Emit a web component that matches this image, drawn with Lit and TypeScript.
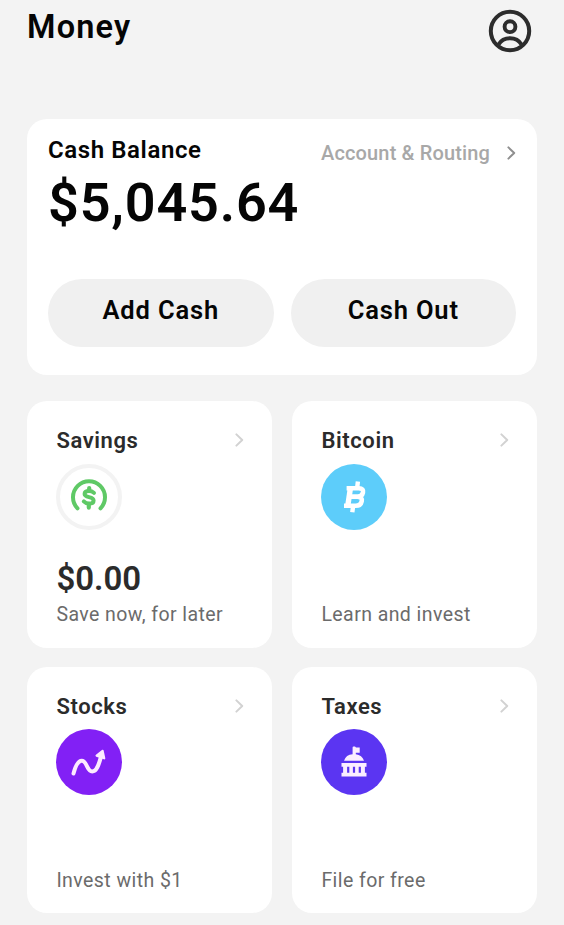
import { LitElement, html, css, svg, TemplateResult } from "lit";
import { customElement, property } from "lit/decorators.js";

const chevron = html`<svg class="chevron" width="9" height="14" viewBox="0 0 9 14">
  <path d="M1.400 1.400 7.200 7 1.400 12.600" fill="none" stroke="currentColor" stroke-width="2" stroke-linecap="round" stroke-linejoin="round" />
</svg>`;

const savingsIcon = svg`
  <circle cx="33" cy="33" r="31" fill="#fff" stroke="#f3f3f3" stroke-width="4" />
  <g fill="none" stroke="#5fc966" stroke-linecap="round" stroke-linejoin="round">
    <path d="M21.500 44.300A16 16 0 1 1 44.500 44.300" stroke-width="4" />
    <path d="M38 28.900C36.600 27.600 35 27 33 27c-2.700 0-4.400 1.200-4.400 3.100 0 4.200 9 1.800 9 6.300 0 2-1.900 3.200-4.500 3.200-2.200 0-3.900-.7-5.300-2.200" stroke-width="4" />
    <path d="M33.200 24v2M32.800 41v2.600" stroke-width="4.200" />
  </g>`;

const bitcoinIcon = svg`
  <circle cx="33" cy="33" r="33" fill="#5dcdfa" />
  <g fill="none" stroke="#fff" stroke-width="4.600" stroke-linejoin="round">
    <path d="M25.600 24.200H37.800c3.600 0 4.800 1.900 4.200 4.300-.6 2.700-2.600 4.200-5.600 4.200H28.300" />
    <path d="M28.300 32.700h8.100c3.600 0 4.900 1.900 4.300 4.500-.6 3-2.700 4.600-6.100 4.600H23" />
    <path d="M29.400 24.200 26.800 41.800" stroke-width="5.400" />
    <path d="M36.900 17.600 36.200 23.500M32 43 31.300 48.300" stroke-width="4.400" />
  </g>`;

const stocksIcon = svg`
  <circle cx="33" cy="33" r="33" fill="#8220f5" />
  <path d="M17.500 44.500C19.500 37 22 31.800 25.800 31.800c5.200 0 5 10.600 10.400 10.600 4.400 0 6.500-6.300 8.600-14" fill="none" stroke="#fdeaff" stroke-width="4" stroke-linecap="round" stroke-linejoin="round" />
  <path d="M46.600 21.800 40.600 26.600 48.200 29.300Z" fill="#fdeaff" stroke="#fdeaff" stroke-width="2.200" stroke-linejoin="round" />`;

const taxesIcon = svg`
  <circle cx="33" cy="33" r="33" fill="#5b35f2" />
  <g fill="#fbeeff">
    <path d="M31.600 18.500Q31.600 17.500 32.600 17.500H34L35 18.500H38.700V23.800H34.800V25.200A9.500 9.500 0 0 1 43 31.800H23A9.500 9.500 0 0 1 31.600 25.200Z" />
    <path d="M20.500 34H45.500V37.800H43.900V43.700H45.500V47.500H20.500V43.700H22.100V37.800H20.500Z" />
  </g>
  <path d="M27.200 37.800v5.900M33 37.800v5.900M38.800 37.800v5.900" stroke="#5b35f2" stroke-width="2.200" />`;

@customElement("product-tile")
export class ProductTile extends LitElement {
  @property() name = "";
  @property() amount = "";
  @property() caption = "";
  @property({ attribute: false }) icon?: TemplateResult;

  static styles = css`
    :host {
      display: flex;
      flex-direction: column;
      box-sizing: border-box;
      padding: 25px 28.500px 18.500px 29.400px;
      border-radius: 20px;
      background: #fff;
      color: #2b2b2b;
    }
    .head {
      display: flex;
      justify-content: space-between;
      height: 28px;
      margin-bottom: 9.500px;
    }
    .name {
      font-size: 22px;
      line-height: 29px;
      font-weight: 600;
      letter-spacing: 0.600px;
    }
    .chevron {
      margin-top: 7px;
      color: #d2d2d2;
    }
    .icon {
      display: block;
      flex: none;
    }
    .foot {
      margin-top: auto;
    }
    .amount {
      font-size: 33px;
      line-height: 40px;
      margin-bottom: 2px;
      font-weight: 600;
    }
    .caption {
      font-size: 19.500px;
      line-height: 28px;
      letter-spacing: 0.430px;
      color: #6b6b6b;
      white-space: nowrap;
    }
  `;

  render() {
    return html`
      <div class="head"><span class="name">${this.name}</span>${chevron}</div>
      <svg class="icon" width="66" height="66" viewBox="0 0 66 66">${this.icon}</svg>
      <div class="foot">
        ${this.amount ? html`<div class="amount">${this.amount}</div>` : ""}
        <div class="caption">${this.caption}</div>
      </div>
    `;
  }
}

@customElement("app-root")
export class AppRoot extends LitElement {
  static styles = css`
    :host {
      display: block;
      box-sizing: border-box;
      height: 925px;
      overflow: hidden;
      padding: 0 27px;
      background: #f3f3f3;
      color: #050505;
      font-family: Roboto, "Liberation Sans", sans-serif;
    }
    .top {
      display: flex;
      justify-content: space-between;
      height: 119px;
    }
    .title {
      margin: 7px 0 0;
      font-size: 32.500px;
      line-height: 40px;
      font-weight: 600;
      letter-spacing: 1.200px;
    }
    .profile {
      margin: 9px 5.500px 0 0;
    }
    .balance {
      box-sizing: border-box;
      height: 256px;
      padding: 16px 21px 28px;
      border-radius: 20px;
      background: #fff;
      display: flex;
      flex-direction: column;
    }
    .row {
      display: flex;
      justify-content: space-between;
      height: 32px;
    }
    .label {
      font-size: 24px;
      line-height: 30px;
      font-weight: 600;
      letter-spacing: 0.600px;
    }
    .link {
      display: flex;
      gap: 17px;
      color: #a8a8a8;
      font-size: 20px;
      font-weight: 500;
      line-height: 36px;
      letter-spacing: 0.150px;
    }
    .link .chevron {
      margin-top: 11px;
      color: #8f8f8f;
    }
    .total {
      font-size: 54px;
      line-height: 64px;
      margin-top: 4px;
      font-weight: 600;
      letter-spacing: 0.800px;
    }
    .actions {
      margin-top: auto;
      display: grid;
      grid-template-columns: 1fr 1fr;
      gap: 17px;
    }
    .action {
      height: 68px;
      padding: 0 0 6px;
      border: 0;
      border-radius: 34px;
      background: #f0f0f0;
      color: inherit;
      font: 600 25.500px/30px Roboto, "Liberation Sans", sans-serif;
      letter-spacing: 0.850px;
    }
    .tiles {
      display: grid;
      grid-template-columns: 1fr 1fr;
      grid-auto-rows: 246.500px;
      gap: 19px 20px;
      margin-top: 26px;
    }
  `;

  render() {
    return html`
      <header class="top">
        <h1 class="title">Money</h1>
        <svg class="profile" width="44" height="44" viewBox="0 0 44 44" fill="none" stroke="#2c2c2c">
          <circle cx="22" cy="22" r="19.200" stroke-width="4" />
          <circle cx="22" cy="17.700" r="5.400" stroke-width="3.900" />
          <path d="M10.500 35.500C13 31.300 17 29.200 22 29.200s9 2.100 11.500 6.300" stroke-width="4" />
        </svg>
      </header>
      <section class="balance">
        <div class="row">
          <span class="label">Cash Balance</span>
          <span class="link"><span>Account &amp; Routing</span>${chevron}</span>
        </div>
        <div class="total">$5,045.64</div>
        <div class="actions">
          <button class="action">Add Cash</button>
          <button class="action">Cash Out</button>
        </div>
      </section>
      <section class="tiles">
        <product-tile name="Savings" amount="$0.00" caption="Save now, for later" .icon=${savingsIcon}></product-tile>
        <product-tile name="Bitcoin" caption="Learn and invest" .icon=${bitcoinIcon}></product-tile>
        <product-tile name="Stocks" caption="Invest with $1" .icon=${stocksIcon}></product-tile>
        <product-tile name="Taxes" caption="File for free" .icon=${taxesIcon}></product-tile>
      </section>
    `;
  }
}
